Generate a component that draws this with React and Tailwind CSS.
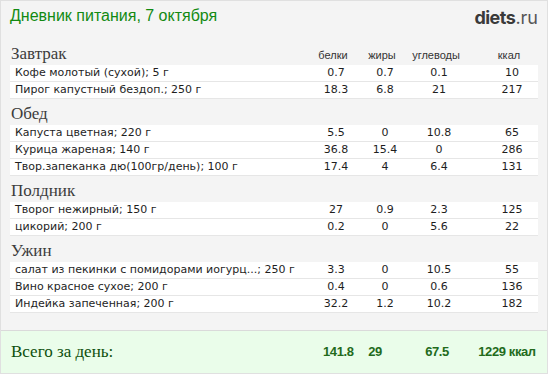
const MEALS = [
  {
    title: "Завтрак",
    items: [
      ["Кофе молотый (сухой); 5 г", "0.7", "0.7", "0.1", "10"],
      ["Пирог капустный бездоп.; 250 г", "18.3", "6.8", "21", "217"],
    ],
  },
  {
    title: "Обед",
    items: [
      ["Капуста цветная; 220 г", "5.5", "0", "10.8", "65"],
      ["Курица жареная; 140 г", "36.8", "15.4", "0", "286"],
      ["Твор.запеканка дю(100гр/день); 100 г", "17.4", "4", "6.4", "131"],
    ],
  },
  {
    title: "Полдник",
    items: [
      ["Творог нежирный; 150 г", "27", "0.9", "2.3", "125"],
      ["цикорий; 200 г", "0.2", "0", "5.6", "22"],
    ],
  },
  {
    title: "Ужин",
    items: [
      ["салат из пекинки с помидорами иогурц...; 250 г", "3.3", "0", "10.5", "55"],
      ["Вино красное сухое; 200 г", "0.4", "0", "0.6", "136"],
      ["Индейка запеченная; 200 г", "32.2", "1.2", "10.2", "182"],
    ],
  },
];

const serif = "font-['Liberation_Serif',serif]";
const verdana = "font-['DejaVu_Sans',sans-serif]";
const arial = "font-['Liberation_Sans',Arial,sans-serif]";

function Cells({ values, className }) {
  return (
    <div className={`flex shrink-0 ${className}`}>
      <span className="w-[50px] text-center">{values[0]}</span>
      <span className="w-[48px] text-center">{values[1]}</span>
      <span className="w-[60px] text-center">{values[2]}</span>
      <span className="w-[69px] pl-[17px] text-center">{values[3]}</span>
    </div>
  );
}

function MealBlock({ meal, withHeader }) {
  return (
    <section>
      <div className="flex h-[26px] items-start">
        <h3 className={`flex-1 pl-[1px] pt-[5px] text-[17px] leading-[20px] text-[#3c3c3c] ${serif}`}>
          {meal.title}
        </h3>
        {withHeader ? (
          <Cells
            values={["белки", "жиры", "углеводы", "ккал"]}
            className={`pt-[9px] pr-[3px] text-[11px] leading-[14px] text-[#333] ${arial}`}
          />
        ) : null}
      </div>
      {meal.items.map((row) => (
        <div
          key={row[0]}
          className={`flex h-[17px] items-start border-b border-[#e6e6e6] bg-white text-[11px] leading-[16px] text-[#1e1e1e] ${verdana}`}
        >
          <span className="flex-1 truncate pl-[5px]">{row[0]}</span>
          <Cells values={row.slice(1)} />
        </div>
      ))}
    </section>
  );
}

export default function App() {
  return (
    <div className="h-[374px] w-[550px] bg-white">
      <div className="flex h-[374px] w-[548px] flex-col border border-[#e0e0e0] bg-[#f4f4f4]">
        <header className="flex h-[38px] items-start justify-between px-[9px] pt-[5px]">
          <h1 className={`text-[16px] leading-[20px] text-[#128a12] ${arial}`}>
            Дневник питания, 7 октября
          </h1>
          <div className="pt-[1px] font-['Inter',sans-serif] text-[18px] leading-[22px] text-[#3a3a3a]">
            <span className="font-bold tracking-[-0.5px]">diets</span>
            <span className="font-normal text-[#555]">.ru</span>
          </div>
        </header>

        <main className="flex-1 px-[9px]">
          {MEALS.map((meal, i) => (
            <MealBlock key={meal.title} meal={meal} withHeader={i === 0} />
          ))}
        </main>

        {/* итог за день */}
        <footer className="flex h-[43px] shrink-0 items-center border-t border-[#dadada] bg-[#eafdea]">
          <span className={`flex-1 pl-[10px] text-[17px] leading-[20px] text-[#0d4f0d] ${serif}`}>
            Всего за день:
          </span>
          <div className={`flex whitespace-nowrap pr-[10px] text-[13px] font-bold leading-[20px] tracking-[-0.4px] text-[#236b1c] ${arial}`}>
            <span className="w-[30px] text-center">141.8</span>
            <span className="w-[44px] text-center">29</span>
            <span className="w-[80px] text-center">67.5</span>
            <span className="w-[60px] text-center">1229 ккал</span>
          </div>
        </footer>
      </div>
    </div>
  );
}
